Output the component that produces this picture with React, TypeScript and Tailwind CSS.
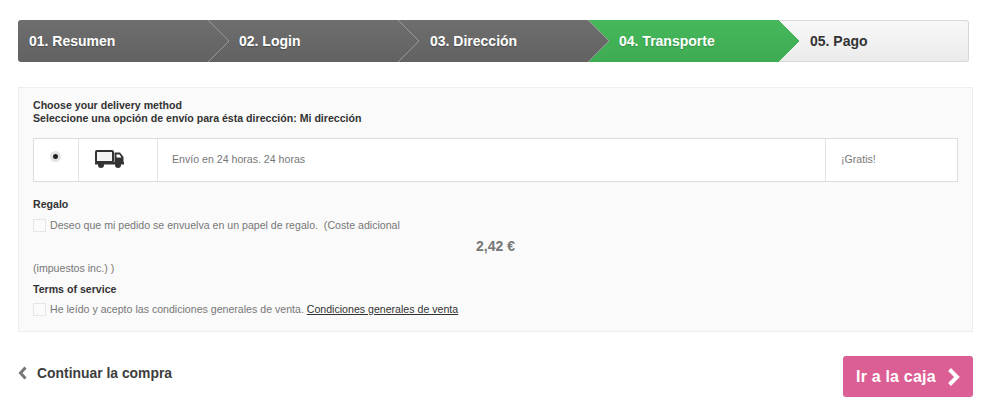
const font = "font-['Liberation_Sans',Arial,sans-serif]";

function Chevron({ from, to, line }: { from: string; to: string; line: string }) {
  const id = "g" + from.slice(1);
  return (
    <svg className="absolute left-full top-0 z-10" width="22" height="42" viewBox="0 0 22 42">
      <defs>
        <linearGradient id={id} x1="0" y1="0" x2="0" y2="1">
          <stop offset="0" stopColor={from} />
          <stop offset="1" stopColor={to} />
        </linearGradient>
      </defs>
      <path d="M0 0 L21 21 L0 42 Z" fill={`url(#${id})`} />
      <path d="M0 0 L21 21 L0 42" fill="none" stroke={line} strokeWidth="1" />
    </svg>
  );
}

function DarkStep({ label, pad }: { label: string; pad: string }) {
  return (
    <div className={`relative flex h-full w-[190px] items-center bg-gradient-to-b from-[#6e6e6e] to-[#626262] text-[14px] font-bold text-white [text-shadow:0_1px_1px_rgba(0,0,0,0.3)] ${pad}`}>
      {label}
      <Chevron from="#6e6e6e" to="#626262" line="#9a9a9a" />
    </div>
  );
}

function Truck() {
  return (
    <svg width="29" height="18" viewBox="0 0 29 18">
      <rect x="1" y="1" width="17" height="11" rx="1" fill="#f4f4f4" stroke="#333" strokeWidth="2" />
      <path d="M19.5 2.5 H25 L28.5 7 V14 H19.5 Z" fill="#333" />
      <path d="M21.5 4.5 H24.5 L26.5 7.5 H21.5 Z" fill="#fff" />
      <rect x="0" y="12" width="29" height="2.5" fill="#333" />
      <circle cx="6" cy="15" r="3" fill="#333" />
      <circle cx="23" cy="15" r="3" fill="#333" />
    </svg>
  );
}

function Box() {
  return <span className="mr-[4px] inline-block h-[13px] w-[13px] shrink-0 border border-[#e6e6e6] bg-[#fbfbfb]" />;
}

export default function App() {
  return (
    <div className={`${font} h-[415px] w-[1000px] overflow-hidden bg-white pl-[18px] pt-5 text-[10.6px] text-[#777]`}>
      <div className="flex h-[42px] w-[951px]">
        <div className="relative flex h-full w-[190px] items-center rounded-l-[3px] bg-gradient-to-b from-[#6e6e6e] to-[#626262] pl-[11px] text-[14px] font-bold text-white [text-shadow:0_1px_1px_rgba(0,0,0,0.3)]">
          01. Resumen
          <Chevron from="#6e6e6e" to="#626262" line="#9a9a9a" />
        </div>
        <DarkStep label="02. Login" pad="pl-[31px]" />
        <DarkStep label="03. Dirección" pad="pl-[32px]" />
        <div className="relative flex h-full w-[190px] items-center bg-gradient-to-b from-[#46b85b] to-[#3dab52] pl-[31px] text-[14px] font-bold text-white [text-shadow:0_1px_1px_rgba(0,0,0,0.2)]">
          04. Transporte
          <Chevron from="#46b85b" to="#3dab52" line="#46b25a" />
        </div>
        <div className="flex h-full flex-1 items-center rounded-r-[3px] border border-l-0 border-[#d8d8d8] bg-gradient-to-b from-[#f8f8f8] to-[#ebebeb] pl-[32px] text-[14px] font-bold text-[#333]">
          05. Pago
        </div>
      </div>

      <div className="mt-[25px] h-[245px] w-[955px] border border-[#eeeeee] bg-[#fafafa] px-[14px] pt-[11px]">
        <p className="font-bold leading-[13px] text-[#333]">Choose your delivery method</p>
        <p className="font-bold leading-[13px] text-[#333]">Seleccione una opción de envío para ésta dirección: Mi dirección</p>

        <div className="mt-[13px] flex h-[44px] w-[925px] border border-[#dddddd] bg-white">
          <div className="flex w-[45px] justify-center border-r border-[#e4e4e4] pr-[2px] pt-[12px]">
            <span className="flex h-[11px] w-[11px] items-center justify-center rounded-full bg-[#e4e4e4]">
              <span className="h-[5px] w-[5px] rounded-full bg-[#222]" />
            </span>
          </div>
          <div className="flex w-[79px] border-r border-[#e4e4e4] pl-[16px] pt-[11px]">
            <Truck />
          </div>
          <div className="flex w-[668px] items-center border-r border-[#e4e4e4] pl-[14px]">Envío en 24 horas. 24 horas</div>
          <div className="flex flex-1 items-center pl-[15px]">¡Gratis!</div>
        </div>

        <p className="mt-[16px] font-bold leading-[13px] text-[#333]">Regalo</p>
        <div className="mt-[8px] flex items-center leading-[13px]">
          <Box />
          <span>Deseo que mi pedido se envuelva en un papel de regalo.&nbsp; (Coste adicional</span>
        </div>
        <p className="mt-[6px] text-center text-[14px] font-bold leading-[16px] text-[#777]">2,42 €</p>
        <p className="mt-[8px] leading-[13px]">(impuestos inc.) )</p>
        <p className="mt-[8px] font-bold leading-[13px] text-[#333]">Terms of service</p>
        <div className="mt-[7px] flex items-center leading-[13px]">
          <Box />
          <span>
            He leído y acepto las condiciones generales de venta.{" "}
            <span className="text-[#333] underline">Condiciones generales de venta</span>
          </span>
        </div>
      </div>

      <div className="mt-[24px] flex h-[41px] w-[955px] items-center justify-between">
        <div className="-mt-[6px] flex items-center text-[13.9px] font-bold text-[#3d3d3d]">
          <svg width="10" height="14" viewBox="0 0 10 14" className="mr-[9px]">
            <path d="M7.5 1.5 L2.5 7 L7.5 12.5" fill="none" stroke="#777" strokeWidth="3" />
          </svg>
          Continuar la compra
        </div>
        <div className="flex h-[41px] w-[130px] items-center rounded-[3px] bg-[#db5e94] pl-[13px] text-[16px] font-bold tracking-[0.2px] text-white">
          Ir a la caja
          <svg width="14" height="18" viewBox="0 0 14 18" className="ml-[11px]">
            <path d="M2.5 1.5 L10 9 L2.5 16.5" fill="none" stroke="#fff" strokeWidth="4" />
          </svg>
        </div>
      </div>
    </div>
  );
}
